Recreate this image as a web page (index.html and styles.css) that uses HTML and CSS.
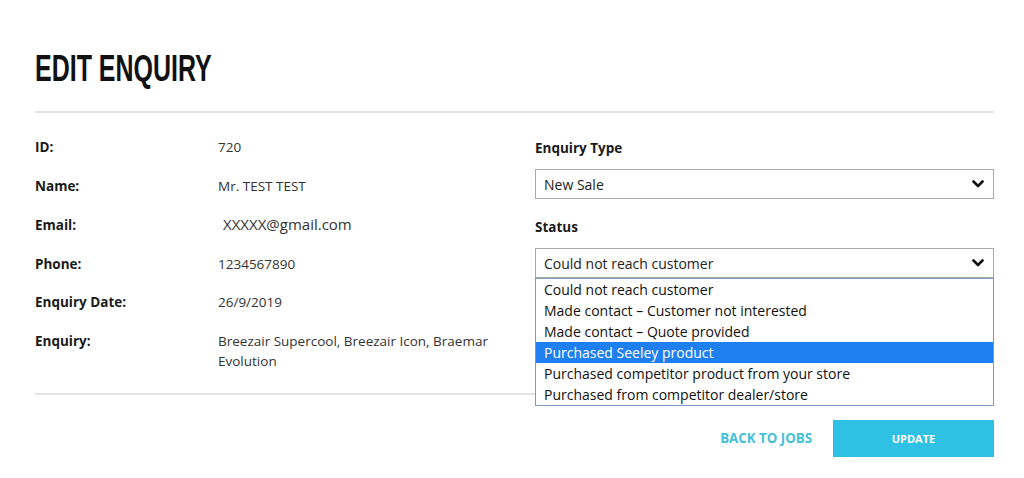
FILE: index.html
```html
<!DOCTYPE html>
<html>
<head>
<meta charset="utf-8">
<link rel="stylesheet" href="styles.css">
</head>
<body>
<div class="page">
  <h1 class="title">EDIT ENQUIRY</h1>
  <hr class="rule">
  <div class="form">
    <div class="details">
      <div class="row"><div class="label">ID:</div><div class="value">720</div></div>
      <div class="row"><div class="label">Name:</div><div class="value">Mr. TEST TEST</div></div>
      <div class="row"><div class="label">Email:</div><div class="value email">XXXXX@gmail.com</div></div>
      <div class="row"><div class="label">Phone:</div><div class="value">1234567890</div></div>
      <div class="row"><div class="label">Enquiry Date:</div><div class="value">26/9/2019</div></div>
      <div class="row"><div class="label">Enquiry:</div><div class="value">Breezair Supercool, Breezair Icon, Braemar Evolution</div></div>
    </div>
    <div class="fields">
      <div class="field-label">Enquiry Type</div>
      <div class="select">
        <span>New Sale</span>
        <svg class="chev" width="12" height="8" viewBox="0 0 12 8"><polyline points="1.5,1.5 6,6 10.5,1.5" fill="none" stroke="#111" stroke-width="2.6" stroke-linecap="round" stroke-linejoin="round"/></svg>
      </div>
      <div class="field-label">Status</div>
      <div class="select status">
        <span>Could not reach customer</span>
        <svg class="chev" width="12" height="8" viewBox="0 0 12 8"><polyline points="1.5,1.5 6,6 10.5,1.5" fill="none" stroke="#111" stroke-width="2.6" stroke-linecap="round" stroke-linejoin="round"/></svg>
        <ul class="options">
          <li>Could not reach customer</li>
          <li>Made contact – Customer not interested</li>
          <li>Made contact – Quote provided</li>
          <li class="active">Purchased Seeley product</li>
          <li>Purchased competitor product from your store</li>
          <li>Purchased from competitor dealer/store</li>
        </ul>
      </div>
    </div>
  </div>
  <hr class="rule bottom">
  <div class="actions">
    <a class="back">BACK TO JOBS</a>
    <button class="update">UPDATE</button>
  </div>
</div>
</body>
</html>
```

FILE: styles.css
```css
html, body {
  margin: 0;
  padding: 0;
  background: #fff;
}
body {
  font-family: "Open Sans", "DejaVu Sans", sans-serif;
  color: #222;
}
.page {
  padding: 47px 30px 0 35px;
}
.title {
  margin: 0;
  font-family: "Liberation Sans", sans-serif;
  font-weight: 700;
  font-size: 37px;
  line-height: 44px;
  color: #111;
  transform: scaleX(0.675);
  transform-origin: left center;
  white-space: nowrap;
}
.rule {
  border: 0;
  height: 2px;
  background: #e4e4e4;
  margin: 20px 0 0;
}
.form {
  display: grid;
  grid-template-columns: 1fr 459px;
  column-gap: 20px;
  padding-top: 24px;
}
.details {
  display: flex;
  flex-direction: column;
  gap: 18.6px;
}
.row {
  display: flex;
  align-items: baseline;
  font-size: 13.5px;
  line-height: 20px;
}
.label {
  width: 183px;
  flex: none;
  font-weight: 700;
  color: #1a1a1a;
}
.value {
  color: #333;
  max-width: 280px;
}
.email {
  padding-left: 5px;
  font-size: 15px;
}
.fields {
  display: flex;
  flex-direction: column;
}
.field-label {
  font-size: 13.5px;
  font-weight: 700;
  line-height: 20px;
  color: #1a1a1a;
  margin-top: 1px;
  margin-bottom: 11px;
}
.select {
  position: relative;
  height: 30px;
  border: 1px solid #a9a9a9;
  box-sizing: border-box;
  display: flex;
  align-items: center;
  justify-content: space-between;
  padding: 0 9px 0 8px;
  font-size: 14px;
  color: #222;
  margin-bottom: 17px;
}
.chev {
  display: block;
}
.options {
  position: absolute;
  left: -1px;
  right: -1px;
  top: 29px;
  margin: 0;
  padding: 0;
  list-style: none;
  background: #fff;
  border: 1px solid #7a9cc4;
  font-size: 14px;
  color: #111;
  z-index: 2;
}
.options li {
  height: 21px;
  line-height: 21px;
  padding-left: 8px;
}
.options li.active {
  background: #1e7ff0;
  color: #fff;
}
.bottom {
  margin-top: 22px;
}
.actions {
  display: flex;
  justify-content: flex-end;
  align-items: center;
  gap: 21px;
  margin-top: 25px;
}
.back {
  font-size: 13.3px;
  font-weight: 700;
  color: #45bfdc;
}
.update {
  width: 161px;
  height: 37px;
  border: 0;
  background: #2fc1e4;
  color: #fff;
  font-family: inherit;
  font-size: 11px;
  font-weight: 700;
}
```
